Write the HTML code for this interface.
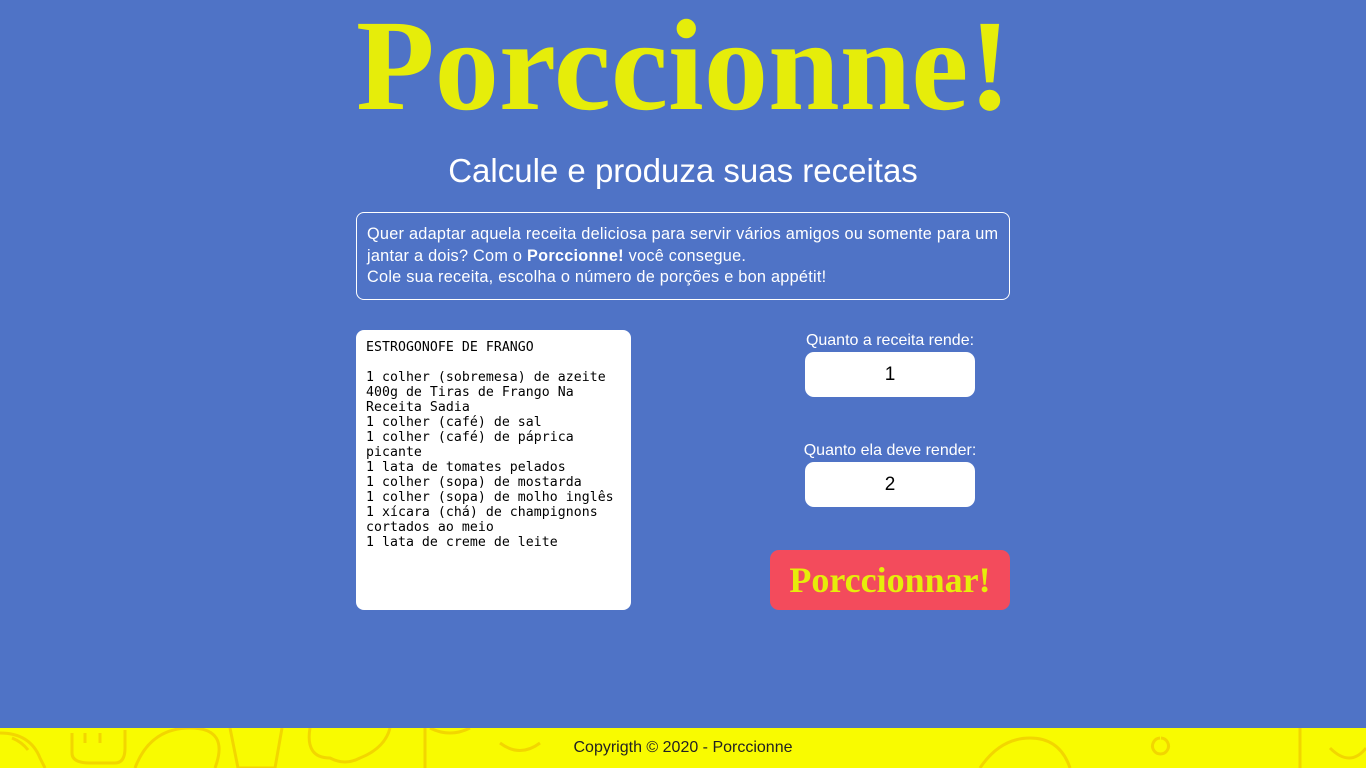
<!DOCTYPE html>
<html><head><meta charset="utf-8"><style>
*{margin:0;padding:0;box-sizing:border-box}
body{width:1366px;height:768px;background:#4f73c6;font-family:"Liberation Sans",sans-serif;color:#fff;position:relative;overflow:hidden}
.logo{position:absolute;left:356px;top:-4px;width:654px;height:140px;color:#e6ed0a;font-family:"Liberation Serif",serif;font-weight:bold;font-size:130px;line-height:140px;white-space:nowrap}
.logo span{display:inline-block;transform-origin:0 0;transform:scaleX(0.99)}
.sub{position:absolute;left:0;width:1366px;top:150px;text-align:center;font-size:33px;line-height:42px}
.desc{position:absolute;left:356px;top:212px;width:654px;height:88px;border:1px solid #fff;border-radius:8px;padding:11px 10px;font-size:16.3px;letter-spacing:0.25px;line-height:21.5px}
.ta{position:absolute;left:356px;top:330px;width:275px;height:280px;background:#fff;border-radius:8px;padding:10px;color:#000;font-family:"DejaVu Sans Mono",monospace;font-size:13.2px;line-height:15px;white-space:pre;letter-spacing:0.05px}
.lbl{position:absolute;left:770px;width:240px;text-align:center;font-size:16px}
.inp{position:absolute;left:805px;width:170px;height:45px;background:#fff;border-radius:9px;color:#000;text-align:center;font-size:19px;line-height:45px}
.btn{position:absolute;left:770px;top:550px;width:240px;height:60px;background:#f34b5c;border-radius:9px;color:#e6ed0a;font-family:"Liberation Serif",serif;font-weight:bold;font-size:36px;line-height:60px;text-align:center}
.foot{position:absolute;left:0;top:728px;width:1366px;height:40px;background:#f9fb00;color:#222;text-align:center;font-size:16px;line-height:40px;overflow:hidden}
.foot svg{position:absolute;left:0;top:0}
.foot div{position:relative}
</style></head><body>
<div class="logo"><span>Porccionne!</span></div>
<div class="sub">Calcule e produza suas receitas</div>
<div class="desc">Quer adaptar aquela receita deliciosa para servir vários amigos ou somente para um jantar a dois? Com o <b>Porccionne!</b> você consegue.<br>Cole sua receita, escolha o número de porções e bon appétit!</div>
<div class="ta">ESTROGONOFE DE FRANGO

1 colher (sobremesa) de azeite
400g de Tiras de Frango Na
Receita Sadia
1 colher (café) de sal
1 colher (café) de páprica
picante
1 lata de tomates pelados
1 colher (sopa) de mostarda
1 colher (sopa) de molho inglês
1 xícara (chá) de champignons
cortados ao meio
1 lata de creme de leite</div>
<div class="lbl" style="top:332px">Quanto a receita rende:</div>
<div class="inp" style="top:352px">1</div>
<div class="lbl" style="top:442px">Quanto ela deve render:</div>
<div class="inp" style="top:462px">2</div>
<div class="btn">Porccionnar!</div>
<div class="foot"><svg width="1366" height="40" fill="none" stroke="#f2d600" stroke-width="3">
<path d="M0 5 Q30 5 40 30 L45 40"/><path d="M12 10 Q22 14 28 22"/><path d="M72 5 V25 Q72 35 90 35 H115 Q125 35 125 20 V2"/><path d="M85 5 V15 M100 5 V15"/>
<path d="M135 40 Q150 0 190 0 Q230 0 215 40"/><path d="M230 0 L238 40 H275 L282 0"/><path d="M310 0 Q305 30 330 30 Q345 38 360 30 Q385 20 390 0"/>
<path d="M425 0 V40 M430 0 Q450 10 470 0"/><path d="M500 15 Q520 30 540 15"/><path d="M980 40 Q1000 10 1030 10 Q1060 10 1070 40"/><path d="M1160 10 a8 8 0 1 0 1 0"/><path d="M1300 0 V40 M1330 20 Q1350 40 1366 20"/>
</svg><div>Copyrigth © 2020 - Porccionne</div></div>
</body></html>
